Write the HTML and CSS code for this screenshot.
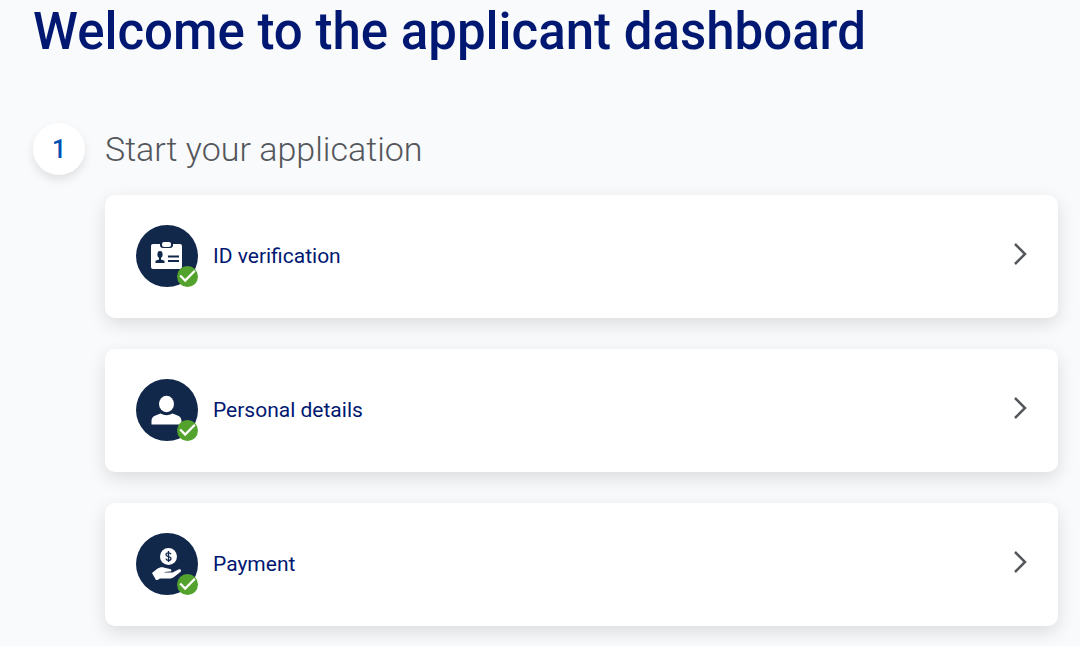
FILE: index.html
```
<!DOCTYPE html>
<html lang="en">
<head>
    <meta charset="UTF-8">
    <meta name="viewport" content="width=device-width, initial-scale=1.0">
    <title>Applicant dashboard</title>
    <link rel="stylesheet" href="styles.css">
</head>
<body>
<main class="dashboard">
    <h1>Welcome to the applicant dashboard</h1>
    <section class="step">
        <span class="step-number">1</span>
        <h2>Start your application</h2>
        <div class="cards">
            <a class="card" href="#id-verification">
                <span class="icon">
                    <svg class="picture" viewBox="0 0 62 62" aria-hidden="true">
                        <rect x="15" y="19" width="31" height="25" rx="2" fill="#fff"/>
                        <rect x="24" y="15" width="13" height="8" rx="3" fill="#12284b"/>
                        <rect x="26" y="17" width="9" height="5" rx="2" fill="#fff"/>
                        <ellipse cx="24" cy="29.500" rx="2.600" ry="3.400" fill="#12284b"/>
                        <path d="M23 32h2v2.500l3.500 1.300V38h-9v-2.200l3.500-1.300z" fill="#12284b"/>
                        <path d="M32 31.500h11M32 36h11" stroke="#12284b" stroke-width="1.800"/>
                    </svg>
                    <svg class="done" viewBox="0 0 20 20" aria-hidden="true">
                        <circle cx="10" cy="10" r="10" fill="#53a22e"/>
                        <path d="M3 9l4.800 4.800L17 4.500" fill="none" stroke="#fff" stroke-width="2.200"/>
                    </svg>
                </span>
                <span class="label">ID verification</span>
                <svg class="arrow" viewBox="0 0 13 22" aria-hidden="true"><path d="M1 1l10 10L1 21"/></svg>
            </a>
            <a class="card" href="#personal-details">
                <span class="icon">
                    <svg class="picture" viewBox="0 0 62 62" aria-hidden="true">
                        <ellipse cx="30.500" cy="25" rx="7.500" ry="8.200" fill="#fff"/>
                        <path d="M15.500 45.500v-3.500c0-3 1.500-4.500 4-5.500l5-2q6 3.500 12 0l5 2c2.500 1 4 2.500 4 5.500v3.500z" fill="#fff"/>
                    </svg>
                    <svg class="done" viewBox="0 0 20 20" aria-hidden="true">
                        <circle cx="10" cy="10" r="10" fill="#53a22e"/>
                        <path d="M3 9l4.800 4.800L17 4.500" fill="none" stroke="#fff" stroke-width="2.200"/>
                    </svg>
                </span>
                <span class="label">Personal details</span>
                <svg class="arrow" viewBox="0 0 13 22" aria-hidden="true"><path d="M1 1l10 10L1 21"/></svg>
            </a>
            <a class="card" href="#payment">
                <span class="icon">
                    <svg class="picture" viewBox="0 0 62 62" aria-hidden="true">
                        <circle cx="32.500" cy="23.500" r="8.500" fill="#fff"/>
                        <path d="M35 21.300c-.4-1-1.300-1.500-2.500-1.500-1.400 0-2.500.7-2.500 1.900 0 2.700 5 1.200 5 3.700 0 1.200-1.100 1.900-2.500 1.900-1.300 0-2.300-.6-2.600-1.700M32.500 18v11" fill="none" stroke="#12284b" stroke-width="1.300"/>
                        <path d="M16 40l5-4c2.500-1.800 5-2.200 7.500-1.300l5.500 1.200c2 .6 1.700 2.600 0 2.700l-5.500.3v.7h8l6-3c2.200-1 3.500.9 1.900 2.400l-6.400 5c-1.600 1.200-3 1.500-5 1.500h-9l-2.500 1.500h-1.500z" fill="#fff"/>
                    </svg>
                    <svg class="done" viewBox="0 0 20 20" aria-hidden="true">
                        <circle cx="10" cy="10" r="10" fill="#53a22e"/>
                        <path d="M3 9l4.800 4.800L17 4.500" fill="none" stroke="#fff" stroke-width="2.200"/>
                    </svg>
                </span>
                <span class="label">Payment</span>
                <svg class="arrow" viewBox="0 0 13 22" aria-hidden="true"><path d="M1 1l10 10L1 21"/></svg>
            </a>
        </div>
    </section>
</main>
</body>
</html>
```
FILE: styles.css
```
body {
    margin: 0;
    background-color: #f9fafc;
    font-family: Roboto, sans-serif;
}
.dashboard {
    padding: 0 22px 20px 33px;
}
h1 {
    margin: 0;
    color: #001871;
    font-size: 51px;
    font-weight: 500;
    line-height: 64px;
}
.step {
    display: grid;
    grid-template-columns: 52px 1fr;
    column-gap: 20px;
    row-gap: 20px;
    align-items: center;
    margin-top: 59px;
}
.step-number {
    height: 52px;
    border-radius: 50%;
    background-color: #fff;
    box-shadow: 0 5px 10px rgba(0, 0, 0, 0.1);
    color: #0050b5;
    font-size: 25px;
    font-weight: 500;
    line-height: 54px;
    text-align: center;
}
h2 {
    margin: 0;
    color: #53565a;
    font-size: 34px;
    font-weight: 300;
    line-height: 52px;
}
.cards {
    grid-column: 2;
    display: flex;
    flex-direction: column;
    gap: 31px;
}
.card {
    display: flex;
    align-items: center;
    padding: 30px 31px 31px;
    border-radius: 10px;
    background-color: #fff;
    box-shadow: 0 6px 18px rgba(0, 0, 0, 0.12);
    color: #001871;
    text-decoration: none;
}
.icon {
    position: relative;
    width: 62px;
    height: 62px;
    margin-right: 15px;
    border-radius: 50%;
    background-color: #12284b;
}
.picture {
    display: block;
}
.done {
    position: absolute;
    right: 0;
    bottom: 0;
    width: 21px;
    height: 21px;
}
.label {
    flex: 1;
    font-size: 21px;
    font-weight: 400;
    line-height: 24px;
}
.arrow {
    width: 13px;
    height: 22px;
    margin-bottom: 5px;
    fill: none;
    stroke: #53565a;
    stroke-width: 2.500;
}
```
